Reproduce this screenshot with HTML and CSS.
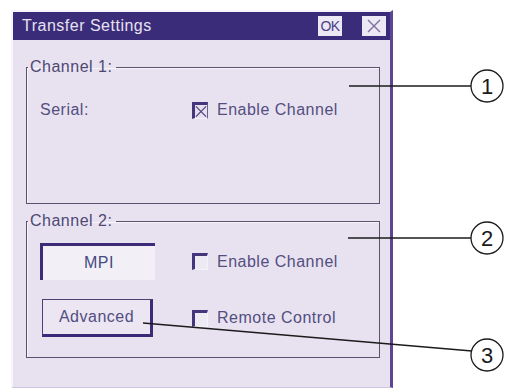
FILE: index.html
```html
<!DOCTYPE html>
<html lang="en">

<head>
  <meta charset="UTF-8">
  <title>Transfer Settings</title>
  <link rel="stylesheet" href="styles.css">
</head>

<body>
  <div class="dialog">
    <div class="titlebar">
      <span class="title">Transfer Settings</span>
      <span class="tbtn ok">OK</span>
      <span class="tbtn close">
        <svg width="16" height="16" viewBox="0 0 16 16">
          <path d="M2 2 L14 14 M14 2 L2 14" stroke="#7a6fa0" stroke-width="1.4" fill="none" />
        </svg>
      </span>
    </div>
    <div class="content">
      <fieldset class="group">
        <legend>Channel 1:</legend>
        <div class="rows">
          <span class="label">Serial:</span>
          <div class="check checked">
            <span class="box">
              <svg width="13" height="13" viewBox="0 0 13 13">
                <path d="M1 1 L12 12 M12 1 L1 12" stroke="#4a3f7e" stroke-width="1.3" fill="none" />
              </svg>
            </span>
            <span>Enable Channel</span>
          </div>
        </div>
      </fieldset>
      <fieldset class="group">
        <legend>Channel 2:</legend>
        <div class="rows two">
          <div class="field">MPI</div>
          <div class="check">
            <span class="box"></span>
            <span>Enable Channel</span>
          </div>
          <div class="button">Advanced</div>
          <div class="check">
            <span class="box"></span>
            <span>Remote Control</span>
          </div>
        </div>
      </fieldset>
    </div>
  </div>

  <!-- callouts -->
  <svg class="callouts" width="508" height="390" viewBox="0 0 508 390">
    <g stroke="#1b1b1b" stroke-width="1.3" fill="none">
      <line x1="349" y1="86" x2="471" y2="86" />
      <line x1="348" y1="238" x2="471" y2="238" />
      <line x1="143" y1="323" x2="472" y2="351" />
      <circle cx="487" cy="86" r="16" fill="#fff" />
      <circle cx="487" cy="238" r="16" fill="#fff" />
      <circle cx="487" cy="355" r="16" fill="#fff" />
    </g>
    <g class="num" text-anchor="middle">
      <text x="487" y="94">1</text>
      <text x="487" y="246">2</text>
      <text x="487" y="363">3</text>
    </g>
  </svg>
</body>

</html>
```

FILE: styles.css
```css
* {
  box-sizing: border-box;
}

body {
  margin: 0;
  background: #fff;
  font-family: "Liberation Sans", Arial, sans-serif;
  font-size: 16px;
  letter-spacing: 0.5px;
  color: #534e80;
  position: relative;
  width: 508px;
  height: 390px;
}

.dialog {
  margin: 10px 0 0 11px;
  width: 382px;
  height: 378px;
  background: #e8e2f0;
  border-top: 2px solid #f7f4fb;
  border-left: 2px solid #f7f4fb;
  border-right: 3px solid #5c4595;
  border-bottom: 1px solid #cfc4de;
  display: flex;
  flex-direction: column;
}

.titlebar {
  height: 28px;
  background: #3b2c79;
  display: flex;
  align-items: center;
  padding: 0 4px 0 9px;
}

.title {
  flex: 1;
  color: #e6e2f2;
  font-size: 16px;
}

.tbtn {
  width: 24px;
  height: 20px;
  background: #ece8f4;
  display: flex;
  align-items: center;
  justify-content: center;
}

.ok {
  color: #4b3f8a;
  font-size: 14px;
  letter-spacing: -0.5px;
  margin-right: 20px;
}

.content {
  padding: 19px 10px 0 13px;
}

.group {
  margin: 0;
  padding: 26px 0 0 0;
  height: 145px;
  border: 1px solid #5a526e;
  box-shadow: inset 1px 1px 0 #f6f3fa;
}

.group + .group {
  margin-top: 9px;
  padding-top: 14px;
}

.group legend {
  margin-left: 1px;
  padding: 0 4px 0 2px;
  line-height: 16px;
  color: #4d4874;
}

.rows {
  display: grid;
  grid-template-columns: 152px 1fr;
  align-items: center;
  height: 18px;
  padding-left: 13px;
}

.rows.two {
  height: auto;
  grid-template-rows: 37px 38px;
  row-gap: 19px;
}

.check {
  display: flex;
  align-items: center;
  gap: 9px;
}

.check .box {
  width: 16px;
  height: 17px;
  background: #eeeaf4;
  border-top: 3px solid #43367d;
  border-left: 3px solid #43367d;
  border-right: 1px solid #f4f2f8;
  border-bottom: 1px solid #f4f2f8;
  display: flex;
  align-items: center;
  justify-content: center;
}

.check.checked .box {
  border-right: 1px solid #6a6090;
  background: #e6e0ee;
}

.field {
  width: 115px;
  height: 37px;
  background: #f2eff6;
  border-top: 3px solid #3d2b78;
  border-left: 3px solid #3d2b78;
  display: flex;
  align-items: center;
  justify-content: center;
  color: #454a80;
}

.button {
  margin-left: 2px;
  width: 111px;
  height: 38px;
  background: #ebe6f2;
  border-top: 1px solid #4a4270;
  border-left: 1px solid #4a4270;
  border-right: 3px solid #3b2a7a;
  border-bottom: 3px solid #3b2a7a;
  display: flex;
  align-items: center;
  justify-content: center;
}

.callouts {
  position: absolute;
  top: 0;
  left: 0;
  pointer-events: none;
}

.num text {
  font-family: "Liberation Sans", Arial, sans-serif;
  font-size: 22px;
  fill: #1b1b1b;
  letter-spacing: 0;
}
```
